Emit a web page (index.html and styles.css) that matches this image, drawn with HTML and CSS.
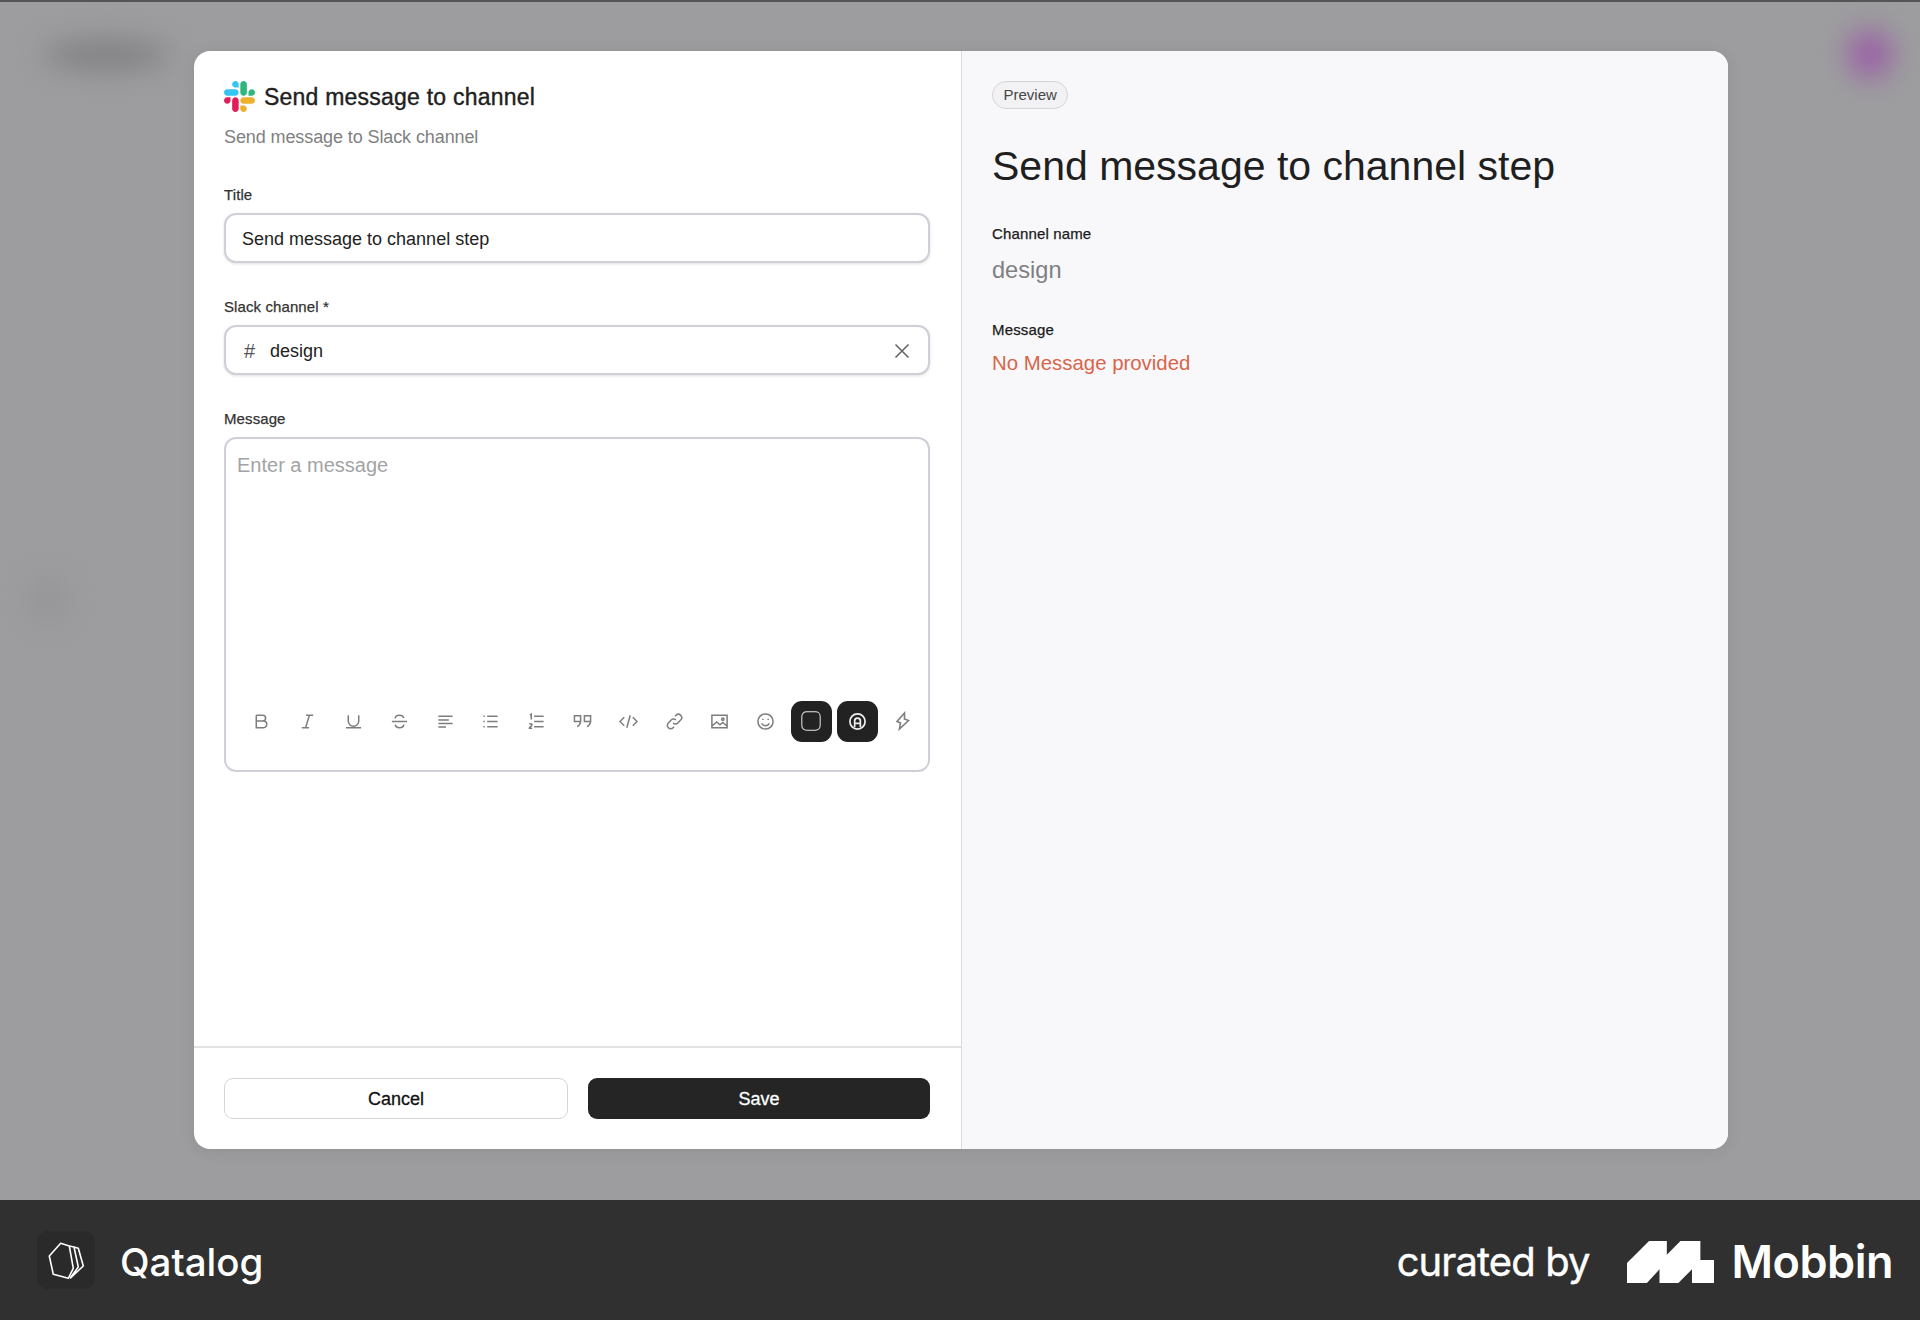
FILE: index.html
```html
<!DOCTYPE html>
<html lang="en">
<head>
    <meta charset="UTF-8">
    <meta name="viewport" content="width=device-width, initial-scale=1.0">
    <title>Send message to channel</title>
    <link rel="stylesheet" href="styles.css">
</head>
<body>

    <div class="backdrop">
        <div class="blob blob-logo"></div>
        <div class="blob blob-avatar"></div>
        <div class="blob blob-side"></div>

        <div class="modal">
            <div class="form-pane">
                <div class="form-body">
                    <div class="form-head">
                        <svg class="slack-icon" viewBox="0 0 122.8 122.8">
                            <path d="M25.8 77.6c0 7.1-5.8 12.9-12.9 12.9S0 84.7 0 77.6s5.8-12.9 12.9-12.9h12.9v12.9z" fill="#E01E5A"/>
                            <path d="M32.3 77.6c0-7.1 5.8-12.9 12.9-12.9s12.9 5.8 12.9 12.9v32.3c0 7.1-5.8 12.9-12.9 12.9s-12.9-5.8-12.9-12.9V77.6z" fill="#E01E5A"/>
                            <path d="M45.2 25.8c-7.1 0-12.9-5.8-12.9-12.9S38.1 0 45.2 0s12.9 5.8 12.9 12.9v12.9H45.2z" fill="#36C5F0"/>
                            <path d="M45.2 32.3c7.1 0 12.9 5.8 12.9 12.9s-5.8 12.9-12.9 12.9H12.9C5.8 58.1 0 52.3 0 45.2s5.8-12.9 12.9-12.9h32.3z" fill="#36C5F0"/>
                            <path d="M97 45.2c0-7.1 5.8-12.9 12.9-12.9s12.9 5.8 12.9 12.9-5.8 12.9-12.9 12.9H97V45.2z" fill="#2EB67D"/>
                            <path d="M90.5 45.2c0 7.1-5.8 12.9-12.9 12.9s-12.9-5.8-12.9-12.9V12.9C64.7 5.8 70.5 0 77.6 0s12.9 5.8 12.9 12.9v32.3z" fill="#2EB67D"/>
                            <path d="M77.6 97c7.1 0 12.9 5.8 12.9 12.9s-5.8 12.9-12.9 12.9-12.9-5.8-12.9-12.9V97h12.9z" fill="#ECB22E"/>
                            <path d="M77.6 90.5c-7.1 0-12.9-5.8-12.9-12.9s5.8-12.9 12.9-12.9h32.3c7.1 0 12.9 5.8 12.9 12.9s-5.8 12.9-12.9 12.9H77.6z" fill="#ECB22E"/>
                        </svg>
                        <h2 class="form-title">Send message to channel</h2>
                    </div>
                    <p class="form-sub">Send message to Slack channel</p>

                    <label class="field-label">Title</label>
                    <div class="field">Send message to channel step</div>

                    <label class="field-label">Slack channel *</label>
                    <div class="field">
                        <span class="hash">#</span>
                        <span class="channel">design</span>
                        <svg class="clear-icon" viewBox="0 0 16 16"><path d="M1.500 1.500l13 13M14.500 1.500l-13 13"/></svg>
                    </div>

                    <label class="field-label">Message</label>
                    <div class="editor">
                        <div class="placeholder">Enter a message</div>
                        <div class="toolbar">
                            <span class="tool"><svg viewBox="0 0 20 20"><path d="M4.500 3.500v13h7.500a3.500 3.500 0 0 0 0-7H4.500m0 0h6.800a3 3 0 0 0 0-6H4.500"/></svg></span>
                            <span class="tool"><svg viewBox="0 0 20 20"><path d="M8.500 3.500h7.500M4 16.500h7.500M12 3.500l-4 13"/></svg></span>
                            <span class="tool"><svg viewBox="0 0 20 20"><path d="M4.500 3.500v6a5.500 5.500 0 0 0 11 0v-6M2 16.500h16"/></svg></span>
                            <span class="tool"><svg viewBox="0 0 20 20"><path d="M2 10h16M14.500 6.500C14 4.500 12.300 3.500 10 3.500 7.500 3.500 5.500 4.800 5.500 6.800M5.500 13.200c.3 2.100 2.100 3.300 4.500 3.300 2.600 0 4.500-1.300 4.500-3.300"/></svg></span>
                            <span class="tool"><svg viewBox="0 0 20 20"><path d="M2.500 4.500h15M2.500 8.300h11M2.500 12h15M2.500 15.700h8"/></svg></span>
                            <span class="tool"><svg viewBox="0 0 20 20"><path d="M6.500 4.500h11M6.500 10h11M6.500 15.500h11M2.500 4.500h1.500M2.500 10h1.500M2.500 15.500h1.500"/></svg></span>
                            <span class="tool"><svg viewBox="0 0 20 20"><path d="M7.500 4.500h10M7.500 10h10M7.500 15.500h10M3 3.200l1.500-.9V8M2.500 13c.4-1 2.800-1 2.800.5 0 1.200-2.800 2-2.800 3.500h3"/></svg></span>
                            <span class="tool"><svg viewBox="0 0 20 20"><path d="M1.500 4h6.500v6H1.500zM8 9c0 3-1 5-3.500 6.500M12 4h6.500v6H12zM18.500 9c0 3-1 5-3.500 6.500"/></svg></span>
                            <span class="tool"><svg viewBox="0 0 20 20"><path d="M5.500 5.500L1 10l4.500 4.500M14.500 5.500L19 10l-4.500 4.500M11.800 3.500l-3.600 13"/></svg></span>
                            <span class="tool"><svg viewBox="0 0 20 20"><path d="M8.500 11.500a3.500 3.500 0 0 0 5 0l3-3a3.500 3.500 0 0 0-5-5l-1 1M11.500 8.500a3.500 3.500 0 0 0-5 0l-3 3a3.500 3.500 0 0 0 5 5l1-1"/></svg></span>
                            <span class="tool"><svg viewBox="0 0 20 20"><path d="M2 3.500h16v13H2zM2.500 14.500l4.500-4 3.500 3 3-2.500 4 3.500"/><circle cx="13.500" cy="7.500" r="1.200"/></svg></span>
                            <span class="tool"><svg viewBox="0 0 20 20"><circle cx="10" cy="10" r="8"/><path d="M6 11.800c.8 1.800 2.200 2.700 4 2.700s3.200-.9 4-2.700M7.200 7v1.500M12.800 7v1.500"/></svg></span>
                            <span class="tool"><span class="tool-dark"><svg viewBox="0 0 24 24"><rect x="2" y="2" width="20" height="20" rx="5"/></svg></span></span>
                            <span class="tool"><span class="tool-dark"><svg class="at-icon" viewBox="0 0 20 20"><circle cx="10" cy="10" r="8"/><path d="M7 16V9.500a3 3 0 0 1 6 0V16M7 12h6"/></svg></span></span>
                            <span class="tool"><svg class="bolt-icon" viewBox="0 0 20 20"><path d="M11.500 2L4 10.500l3.500 1.500L6.500 18l9-8.500-4-1.500z"/></svg></span>
                        </div>
                    </div>
                </div>

                <div class="form-foot">
                    <button class="btn btn-cancel">Cancel</button>
                    <button class="btn btn-save">Save</button>
                </div>
            </div>

            <div class="preview-pane">
                <span class="pill">Preview</span>
                <h1 class="preview-title">Send message to channel step</h1>
                <div class="preview-label">Channel name</div>
                <div class="preview-value">design</div>
                <div class="preview-label preview-label-msg">Message</div>
                <div class="preview-error">No Message provided</div>
            </div>
        </div>
    </div>

    <div class="bottom-bar">
        <div class="brand">
            <span class="brand-icon">
                <svg viewBox="0 0 58 58">
                    <path d="M12.300 25L23.700 12.300 32.300 15 36.300 37.300 31.300 47.300 16.300 43.300z"/>
                    <path d="M32.300 15L37 16 41.300 36 33 47.300M37 16l4.300 1.300L46.300 35 33 47.300"/>
                </svg>
            </span>
            <span class="brand-name">Qatalog</span>
        </div>
        <div class="credit">
            <span class="curated">curated by</span>
            <svg class="mobbin-mark" viewBox="0 0 83 40"><polygon points="0,21 21,0 38,0 38,13 51,0 70,0 70,18 83,18 83,40 62,40 62,27 49,40 31,40 31,27 19,40 0,40"/></svg>
            <span class="mobbin-name">Mobbin</span>
        </div>
    </div>

</body>
</html>
```

FILE: styles.css
```css
* {
    box-sizing: border-box;
}
body {
    font-family: "Liberation Sans", Arial, sans-serif;
    margin: 0;
    padding: 0;
    background-color: #303030;
}
.backdrop {
    position: relative;
    height: 1200px;
    padding-top: 51px;
    background-color: #9d9d9f;
    border-top: 2px solid #555;
    overflow: hidden;
}
.blob {
    position: absolute;
    border-radius: 50%;
    filter: blur(14px);
}
.blob-logo {
    left: 44px;
    top: 38px;
    width: 125px;
    height: 30px;
    background: #808082;
}
.blob-avatar {
    left: 1848px;
    top: 28px;
    width: 44px;
    height: 48px;
    background: #9a5fa6;
}
.blob-side {
    left: 28px;
    top: 575px;
    width: 40px;
    height: 44px;
    background: #959597;
}
.modal {
    position: relative;
    display: flex;
    width: 1534px;
    height: 1098px;
    margin: -2px 0 0 194px;
    background: white;
    border-radius: 16px;
    overflow: hidden;
    box-shadow: 0px 2px 16px 0px rgba(0, 0, 0, 0.08);
}
.form-pane {
    display: flex;
    flex-direction: column;
    width: 768px;
    border-right: 1px solid #dcdcdf;
}
.form-body {
    flex: 1;
    padding: 30px 31px 0 30px;
}
.form-head {
    display: flex;
    align-items: center;
    gap: 9px;
}
.slack-icon {
    width: 31px;
    height: 31px;
}
.form-title {
    margin: 0;
    padding-top: 1px;
    font-size: 23px;
    font-weight: 500;
    letter-spacing: 0.22px;
    color: #1f1f1f;
    -webkit-text-stroke: 0.4px #1f1f1f;
}
.form-sub {
    margin: 14px 0 0;
    font-size: 18px;
    line-height: 22px;
    letter-spacing: -0.1px;
    color: #7f7f82;
}
.field-label {
    display: block;
    margin: 35px 0 9px;
    font-size: 15px;
    line-height: 18px;
    letter-spacing: 0.1px;
    color: #333;
    -webkit-text-stroke: 0.25px #333;
}
.form-sub + .field-label {
    margin-top: 38px;
}
.field {
    display: flex;
    align-items: center;
    height: 50px;
    padding: 2px 16px 0;
    font-size: 18px;
    color: #222;
    background: white;
    border: 2px solid #cfcfd8;
    border-radius: 12px;
    box-shadow: 0px 1px 3px 0px rgba(0, 0, 0, 0.12);
}
.hash {
    width: 28px;
    padding-left: 2px;
    font-size: 20px;
    color: #555;
}
.channel {
    flex: 1;
}
.clear-icon {
    width: 16px;
    height: 16px;
    margin-right: 2px;
    fill: none;
    stroke: #666;
    stroke-width: 1.6;
}
.editor {
    display: flex;
    flex-direction: column;
    height: 335px;
    padding: 14px 10px 0 11px;
    border: 2px solid #cfcfd8;
    border-radius: 12px;
}
.placeholder {
    flex: 1;
    font-size: 20px;
    line-height: 24px;
    color: #a3a3a6;
}
.toolbar {
    display: flex;
    height: 42px;
    margin-bottom: 28px;
    padding-left: 2px;
}
.tool {
    display: flex;
    align-items: center;
    justify-content: center;
    width: 45.8px;
    flex-shrink: 0;
}
.tool svg {
    width: 19px;
    height: 19px;
    fill: none;
    stroke: #7e7e7e;
    stroke-width: 1.6;
}
.tool .bolt-icon {
    width: 20px;
    height: 20px;
}
.tool-dark {
    display: flex;
    align-items: center;
    justify-content: center;
    width: 41px;
    height: 41px;
    background-color: #222;
    border-radius: 11px;
}
.tool-dark svg {
    width: 22px;
    height: 22px;
    stroke: #e6e6e6;
    stroke-width: 1.1;
}
.tool-dark .at-icon {
    width: 19px;
    height: 19px;
    stroke: #f0f0f0;
    stroke-width: 1.8;
}
.form-foot {
    display: flex;
    gap: 20px;
    height: 103px;
    padding: 30px 31px 0 30px;
    border-top: 2px solid #e2e2e2;
}
.btn {
    flex: 1;
    height: 41px;
    padding-top: 2px;
    font-family: inherit;
    font-size: 18px;
    font-weight: 500;
    border-radius: 9px;
    -webkit-text-stroke: 0.3px currentColor;
}
.btn-cancel {
    background: white;
    color: #111;
    border: 1px solid #d6d6d6;
}
.btn-save {
    background-color: #252525;
    color: white;
    border: none;
}
.preview-pane {
    flex: 1;
    padding: 30px 30px;
    background-color: #f8f8fb;
}
.pill {
    display: inline-block;
    height: 28px;
    padding: 0 10.500px;
    font-size: 15px;
    line-height: 25px;
    color: #444;
    background: #f2f2f4;
    border: 1px solid #d4d4d6;
    border-radius: 14px;
}
.preview-title {
    margin: 32px 0 0;
    font-size: 41px;
    line-height: 50px;
    font-weight: 400;
    color: #1f1f1f;
}
.preview-label {
    margin-top: 34px;
    font-size: 15px;
    line-height: 18px;
    letter-spacing: 0.15px;
    color: #1a1a1a;
    -webkit-text-stroke: 0.25px #1a1a1a;
}
.preview-label-msg {
    margin-top: 36px;
}
.preview-value {
    margin-top: 12px;
    font-size: 23.6px;
    line-height: 30px;
    color: #808083;
}
.preview-error {
    margin-top: 11px;
    font-size: 20.4px;
    line-height: 26px;
    color: #d8654a;
}
.bottom-bar {
    display: flex;
    align-items: center;
    justify-content: space-between;
    height: 120px;
    padding: 0 27px 0 37px;
    background-color: #303030;
    color: white;
}
.brand {
    display: flex;
    align-items: center;
    gap: 25px;
}
.brand-icon {
    display: flex;
    align-items: center;
    justify-content: center;
    width: 58px;
    height: 58px;
    background-color: #2a2a2a;
    border-radius: 11px;
}
.brand-icon svg {
    width: 58px;
    height: 58px;
    fill: none;
    stroke: white;
    stroke-width: 1.6;
    stroke-linejoin: round;
}
.brand-name {
    padding-top: 4px;
    font-family: Inter, sans-serif;
    font-size: 38.5px;
    font-weight: 500;
}
.credit {
    display: flex;
    align-items: center;
}
.curated {
    padding-top: 2px;
    font-family: Inter, sans-serif;
    font-size: 40px;
    font-weight: 400;
    letter-spacing: -0.9px;
    -webkit-text-stroke: 0.4px white;
}
.mobbin-mark {
    width: 87px;
    height: 42px;
    margin-top: 4px;
    margin-left: 37px;
    fill: white;
}
.mobbin-name {
    margin-left: 18px;
    padding-top: 2px;
    font-family: Inter, sans-serif;
    font-size: 45px;
    font-weight: 600;
    letter-spacing: -0.5px;
}
```
